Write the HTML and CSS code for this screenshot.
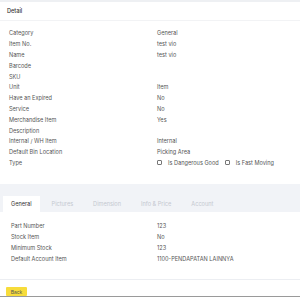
FILE: index.html
```html
<!DOCTYPE html>
<html lang="en">
  <head>
    <meta charset="UTF-8" />
    <meta name="viewport" content="width=device-width, initial-scale=1.0" />
    <title>Item Detail</title>
    <link rel="stylesheet" href="styles.css">
  </head>
  <body>
    <div class="top-strip"></div>

    <div class="card">
      <div class="card-header">Detail</div>
      <div class="card-body">
        <div class="row"><div class="label">Category</div><div class="value">General</div></div>
        <div class="row"><div class="label">Item No.</div><div class="value">test vio</div></div>
        <div class="row"><div class="label">Name</div><div class="value">test vio</div></div>
        <div class="row"><div class="label">Barcode</div><div class="value"></div></div>
        <div class="row"><div class="label">SKU</div><div class="value"></div></div>
        <div class="row"><div class="label">Unit</div><div class="value">Item</div></div>
        <div class="row"><div class="label">Have an Expired</div><div class="value">No</div></div>
        <div class="row"><div class="label">Service</div><div class="value">No</div></div>
        <div class="row"><div class="label">Merchandise Item</div><div class="value">Yes</div></div>
        <div class="row"><div class="label">Description</div><div class="value"></div></div>
        <div class="row"><div class="label">Internal / WH Item</div><div class="value">Internal</div></div>
        <div class="row"><div class="label">Default Bin Location</div><div class="value">Picking Area</div></div>
        <div class="row">
          <div class="label">Type</div>
          <div class="value checks">
            <span class="check"><span class="box"></span>Is Dangerous Good</span>
            <span class="check"><span class="box"></span>Is Fast Moving</span>
          </div>
        </div>
      </div>
    </div>

    <div class="section">
      <div class="tabs">
        <div class="tab active">General</div>
        <div class="tab">Pictures</div>
        <div class="tab">Dimension</div>
        <div class="tab">Info &amp; Price</div>
        <div class="tab">Account</div>
      </div>
      <div class="tab-panel">
        <div class="row"><div class="label">Part Number</div><div class="value">123</div></div>
        <div class="row"><div class="label">Stock Item</div><div class="value">No</div></div>
        <div class="row"><div class="label">Minimum Stock</div><div class="value">123</div></div>
        <div class="row"><div class="label">Default Account Item</div><div class="value">1100-PENDAPATAN LAINNYA</div></div>
      </div>
    </div>

    <div class="footer">
      <button class="btn-back">Back</button>
    </div>
    <div class="bottom-bar"></div>
  </body>
</html>
```

FILE: styles.css
```css
* {
  margin: 0;
  padding: 0;
  box-sizing: border-box;
}

body {
  width: 300px;
  height: 298px;
  overflow: hidden;
  background: #ffffff;
  font-family: 'Inter', 'Liberation Sans', sans-serif;
  font-size: 5.6px;
  color: #444;
}

.top-strip {
  height: 2px;
  background: #eef0f3;
}

.card {
  background: #fff;
}

.card-header {
  height: 19px;
  padding: 0 7px;
  display: flex;
  align-items: center;
  font-weight: 500;
  color: #333;
  border-bottom: 1px solid #f2f3f5;
}

.card-body {
  height: 163px;
  padding: 7px 0 0 9px;
}

.row {
  display: flex;
  height: 10.8px;
  align-items: center;
}

.label {
  width: 148px;
  color: #555;
}

.value {
  color: #555;
}

.checks {
  display: flex;
  gap: 6px;
}

.check {
  display: flex;
  align-items: center;
}

.box {
  width: 5px;
  height: 5px;
  border: 0.6px solid #777;
  border-radius: 1px;
  margin-right: 6px;
}

.section {
  background: #f1f3f7;
  padding-top: 12px;
}

.tabs {
  display: flex;
  height: 16px;
  padding-left: 3px;
}

.tab {
  display: flex;
  align-items: center;
  padding: 0 8px;
  margin-right: 4px;
  color: #c4c8d0;
}

.tab.active {
  background: #fff;
  color: #333;
}

.tab-panel {
  height: 68px;
  background: #fff;
  padding: 9px 0 0 11px;
  border-bottom: 1px solid #eceef2;
}

.tab-panel .label {
  width: 146px;
}

.footer {
  height: 16px;
  padding: 7px 0 0 6px;
  background: #fff;
}

.btn-back {
  display: block;
  width: 21px;
  height: 9px;
  border: none;
  border-radius: 1px;
  background: #f7dc3b;
  font-family: inherit;
  font-size: 5px;
  color: #555;
}

.bottom-bar {
  height: 1px;
  background: #9a9a9a;
}
```
